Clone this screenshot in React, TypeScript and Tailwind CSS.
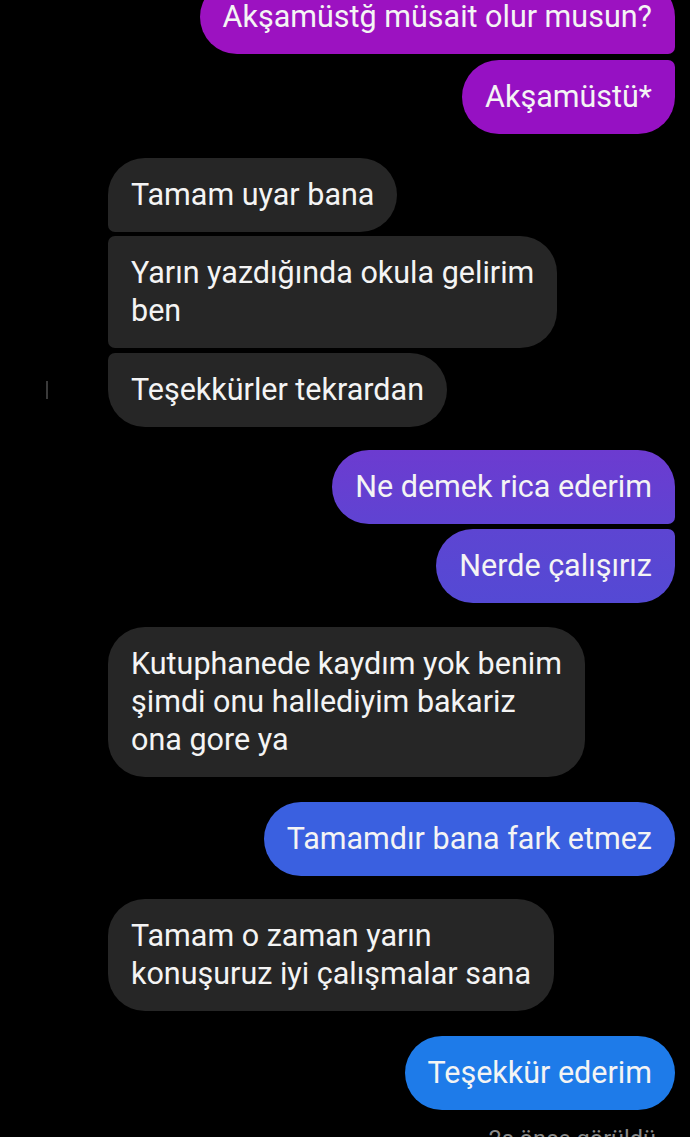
type Side = 'in' | 'out';

interface Msg {
    side: Side;
    lines: string[];
    corners: string;
    bg: string;
    gap: string;
    mark?: boolean;
}

const messages: Msg[] = [
    { side: 'out', lines: ['Akşamüstğ müsait olur musun?'], corners: 'rounded-[37px] rounded-br-[7px]', bg: 'bg-[#9c12c1]', gap: '-mt-[20px]' },
    { side: 'out', lines: ['Akşamüstü*'], corners: 'rounded-[37px] rounded-tr-[7px]', bg: 'bg-[#9611c3]', gap: 'mt-[6px]' },
    { side: 'in', lines: ['Tamam uyar bana'], corners: 'rounded-[37px] rounded-bl-[7px]', bg: 'bg-[#262626]', gap: 'mt-[24px]' },
    { side: 'in', lines: ['Yarın yazdığında okula gelirim', 'ben'], corners: 'rounded-[37px] rounded-tl-[7px] rounded-bl-[7px]', bg: 'bg-[#262626]', gap: 'mt-[4px]' },
    { side: 'in', lines: ['Teşekkürler tekrardan'], corners: 'rounded-[37px] rounded-tl-[7px]', bg: 'bg-[#262626]', gap: 'mt-[5px]', mark: true },
    { side: 'out', lines: ['Ne demek rica ederim'], corners: 'rounded-[37px] rounded-br-[7px]', bg: 'bg-gradient-to-b from-[#6c3bd0] to-[#5f43d2]', gap: 'mt-[23px]' },
    { side: 'out', lines: ['Nerde çalışırız'], corners: 'rounded-[37px] rounded-tr-[7px]', bg: 'bg-gradient-to-b from-[#5d45d2] to-[#5449d4]', gap: 'mt-[5px]' },
    { side: 'in', lines: ['Kutuphanede kaydım yok benim', 'şimdi onu hallediyim bakariz', 'ona gore ya'], corners: 'rounded-[37px]', bg: 'bg-[#262626]', gap: 'mt-[24px]' },
    { side: 'out', lines: ['Tamamdır bana fark etmez'], corners: 'rounded-[37px]', bg: 'bg-[#3a60e0]', gap: 'mt-[25px]' },
    { side: 'in', lines: ['Tamam o zaman yarın', 'konuşuruz iyi çalışmalar sana'], corners: 'rounded-[37px]', bg: 'bg-[#262626]', gap: 'mt-[23px]' },
    { side: 'out', lines: ['Teşekkür ederim'], corners: 'rounded-[37px]', bg: 'bg-[#1e7be9]', gap: 'mt-[25px]' },
];

function Bubble({ m }: { m: Msg }) {
    const isOut = m.side === 'out';
    return (
        <div className={`flex items-center ${isOut ? 'justify-end pr-[15px]' : 'pl-[46px]'} ${m.gap}`}>
            {!isOut && (
                <div className="w-[62px] flex">
                    {m.mark && <div className="w-[2px] h-[18px] bg-[#3a3a3a]" />}
                </div>
            )}
            <div className={`${m.corners} ${m.bg} px-[23px] py-[18px] text-[30.5px] leading-[38px] text-[#f4f4f4]`}>
                {m.lines.map((l, i) => (
                    <div key={i} className="whitespace-nowrap">{l}</div>
                ))}
            </div>
        </div>
    );
}

export default function App() {
    return (
        <div className="w-[690px] h-[1137px] overflow-hidden bg-black font-['Roboto',sans-serif]">
            {messages.map((m, i) => (
                <Bubble key={i} m={m} />
            ))}
            {/* seen receipt, cut off at the bottom */}
            <div className="mt-[15px] pr-[34px] text-right text-[23.5px] leading-[28px] text-[#8a8a8a]">2s önce görüldü</div>
        </div>
    );
}
